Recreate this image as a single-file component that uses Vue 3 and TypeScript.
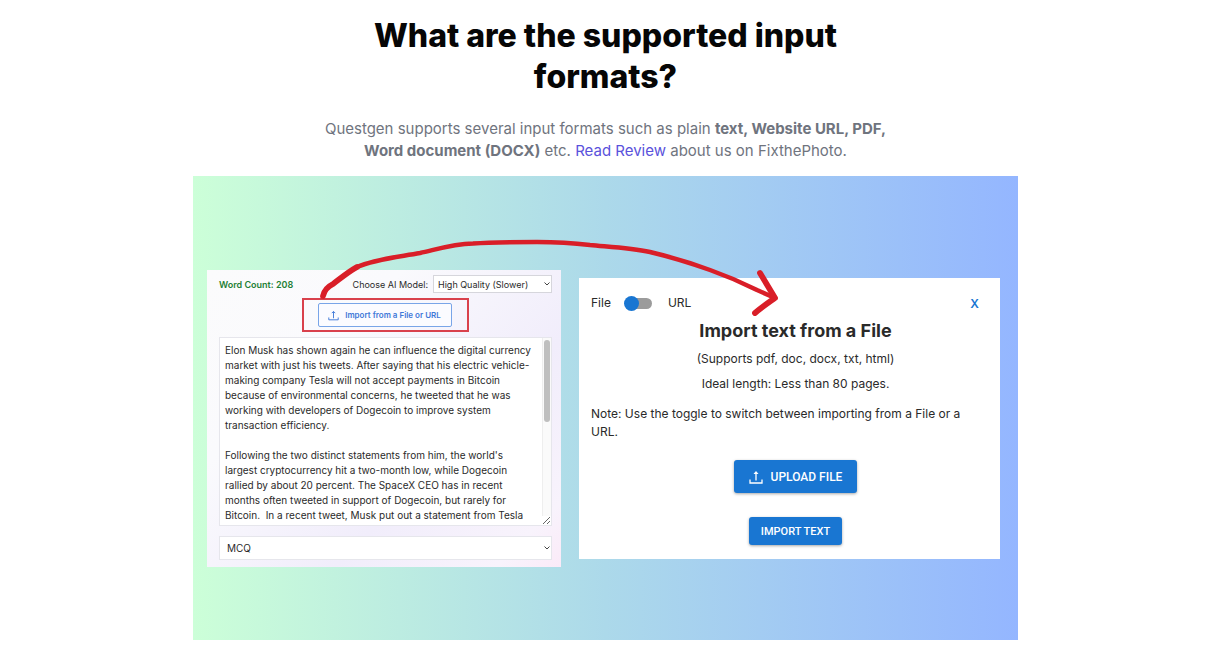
<script setup lang="ts">
import { ref } from 'vue'

const model = ref('High Quality (Slower)')
const quizType = ref('MCQ')
const useUrl = ref(false)

const sample = [
  'Elon Musk has shown again he can influence the digital currency market with just his tweets. After saying that his electric vehicle-making company Tesla will not accept payments in Bitcoin because of environmental concerns, he tweeted that he was working with developers of Dogecoin to improve system transaction efficiency.',
  "Following the two distinct statements from him, the world's largest cryptocurrency hit a two-month low, while Dogecoin rallied by about 20 percent. The SpaceX CEO has in recent months often tweeted in support of Dogecoin, but rarely for Bitcoin.  In a recent tweet, Musk put out a statement from Tesla",
]
const content = ref(sample.join('\n\n'))
</script>

<template>
  <main class="page">
    <header class="intro">
      <h1>What are the supported input formats?</h1>
      <p>
        Questgen supports several input formats such as plain <strong>text, Website URL, PDF,</strong>
        <br />
        <strong>Word document (DOCX)</strong> etc. <a href="#">Read Review</a> about us on FixthePhoto.
      </p>
    </header>

    <section class="stage">
      <div class="editor">
        <div class="editor-head">
          <span class="count">Word Count: 208</span>
          <label class="model-label" for="model">Choose AI Model:</label>
          <span class="select model">
            <select id="model" v-model="model">
              <option>High Quality (Slower)</option>
            </select>
            <svg viewBox="0 0 8 6" aria-hidden="true"><path d="M1.500 1.500 4 4l2.500-2.500" /></svg>
          </span>
        </div>
        <div class="highlight">
          <button type="button" class="outline">
            <svg viewBox="0 0 14 14" aria-hidden="true">
              <path d="M1 9.500v3h12v-3M7 10.500V2M4.800 4l2.200-2.200L9.200 4" />
            </svg>
            Import from a File or URL
          </button>
        </div>
        <div class="text-box">
          <textarea v-model="content" aria-label="Text content" spellcheck="false"></textarea>
          <span class="track" aria-hidden="true"><span class="thumb"></span></span>
        </div>
        <span class="select type">
          <select v-model="quizType" aria-label="Question type">
            <option>MCQ</option>
          </select>
          <svg viewBox="0 0 8 6" aria-hidden="true"><path d="M1.500 1.500 4 4l2.500-2.500" /></svg>
        </span>
      </div>

      <div class="dialog">
        <div class="dialog-head">
          <label for="source">File</label>
          <input id="source" v-model="useUrl" type="checkbox" role="switch" />
          <label for="source">URL</label>
          <button type="button" class="close">X</button>
        </div>
        <h2>Import text from a File</h2>
        <p class="hint">(Supports pdf, doc, docx, txt, html)</p>
        <p class="hint">Ideal length: Less than 80 pages.</p>
        <p class="note">Note: Use the toggle to switch between importing from a File or a URL.</p>
        <button type="button" class="solid upload">
          <svg viewBox="0 0 14 14" aria-hidden="true">
            <path d="M1 9.500V13h12V9.500M7 10.500V3" />
            <path class="tip" d="M4.500 4 7 1l2.500 3z" />
          </svg>
          UPLOAD FILE
        </button>
        <button type="button" class="solid">IMPORT TEXT</button>
      </div>

      <svg class="arrow" viewBox="0 0 825 464" aria-hidden="true">
        <path class="thick" d="M130 120C131 115 134 111 140 108C148 102 155 96 164 91" />
        <path
          d="M164 91C182 83 205 81 227 77C245 73 260 68 280 67.500C300 66 322 66 344 66C362 66 380 67 397 69C418 71 438 72 457 76C478 81 498 87 517 94C534 100 550 107 564 114L582 122"
        />
        <path class="thick" d="M567 97 582 122C575 127 569 131 562 137" />
      </svg>
    </section>
  </main>
</template>

<style>
body {
  margin: 0;
  background: #fff;
}
</style>

<style scoped>
.page {
  box-sizing: border-box;
  padding: 15px 13px 24px 0;
  font-family: Inter, 'Liberation Sans', sans-serif;
  color: #2a2a2a;
}
.page * {
  box-sizing: border-box;
}
h1,
h2,
p {
  margin: 0;
}
button,
select,
textarea {
  font-family: inherit;
  color: inherit;
}
.intro {
  max-width: 576px;
  margin: 0 auto 14px;
  text-align: center;
}
.intro h1 {
  padding: 0 40px;
  font-size: 32px;
  line-height: 41px;
  font-weight: 800;
  color: #060606;
}
.intro p {
  margin-top: 21px;
  font-size: 15px;
  line-height: 22px;
  color: #6f747e;
}
.intro strong {
  font-weight: 700;
}
.intro a {
  color: #5a52dc;
  text-decoration: none;
}
.stage {
  position: relative;
  display: grid;
  grid-template-columns: 354fr 421fr;
  gap: 18px;
  align-items: center;
  max-width: 825px;
  margin: 0 auto;
  padding: 94px 18px 73px 14px;
  background: linear-gradient(90deg, #ccffd8 0%, #acd9ea 50%, #94b6ff 100%);
}
.editor {
  display: flex;
  flex-direction: column;
  padding: 5px 9px 7px 12px;
  background: linear-gradient(135deg, #fbfbfc 0%, #fafafd 30%, #f1edfb 65%, #f8f3fc 90%, #fbeaf8 100%);
}
.editor-head {
  display: flex;
  align-items: center;
  gap: 5px;
  font-size: 9px;
}
.count {
  margin-right: auto;
  font-weight: 600;
  color: #1f8036;
}
.select {
  position: relative;
  display: block;
}
.select select {
  display: block;
  width: 100%;
  margin: 0;
  padding: 0 14px 0 4px;
  border: 1px solid #d6d6dc;
  border-radius: 0;
  background: #fff;
  appearance: none;
}
.select svg {
  position: absolute;
  right: 1px;
  top: 50%;
  width: 8px;
  height: 6px;
  margin-top: -3px;
  pointer-events: none;
  fill: none;
  stroke: #444;
  stroke-width: 1;
}
.model {
  width: 119px;
}
.model select {
  height: 18px;
  font-size: 9px;
}
.highlight {
  align-self: center;
  margin: 5px 0;
  padding: 3px 15px 3px 14px;
  border: 2px solid #d9414c;
}
.outline {
  display: flex;
  align-items: center;
  gap: 6px;
  height: 24px;
  padding: 0 10px 0 9px;
  border: 1px solid #79a5e8;
  border-radius: 2px;
  background: #fbfbff;
  color: #3f78d8;
  font-size: 8px;
  font-weight: 600;
}
.outline svg {
  width: 11px;
  height: 11px;
  fill: none;
  stroke: currentColor;
  stroke-width: 1.2;
}
.text-box {
  position: relative;
}
textarea {
  display: block;
  width: 100%;
  height: 189px;
  padding: 5px 17px 2px 5px;
  border: 1px solid #e6e6ec;
  background: #fff;
  font-size: 10px;
  line-height: 15px;
  resize: vertical;
}
.track {
  position: absolute;
  top: 1px;
  right: 1px;
  bottom: 10px;
  width: 9px;
  padding: 2px 1px;
  border-left: 1px solid #eee;
  background: #fafafa;
  pointer-events: none;
}
.thumb {
  display: block;
  width: 6px;
  height: 47%;
  border-radius: 3px;
  background: #bfbfbf;
}
.type {
  margin-top: 10px;
}
.type select {
  height: 24px;
  padding-left: 7px;
  border-color: #e6e6ec;
  font-size: 10px;
}
.dialog {
  display: flex;
  flex-direction: column;
  align-items: center;
  padding: 15px 0 14px 12px;
  background: #fff;
  font-size: 12px;
  line-height: 18px;
}
.dialog-head {
  display: flex;
  align-items: center;
  align-self: stretch;
  height: 20px;
}
.dialog-head input {
  position: relative;
  width: 28px;
  height: 15px;
  margin: 0 16px 0 13px;
  appearance: none;
}
.dialog-head input::before {
  content: '';
  position: absolute;
  inset: 2px 0 2px 2px;
  border-radius: 6px;
  background: #9b9b9b;
}
.dialog-head input::after {
  content: '';
  position: absolute;
  left: 0;
  top: 0;
  width: 15px;
  height: 15px;
  border-radius: 50%;
  background: #1976d2;
}
.dialog-head input:checked::after {
  left: 13px;
}
.close {
  margin-left: auto;
  padding: 0 21px 0 0;
  border: 0;
  background: none;
  color: #1976d2;
  font-size: 12px;
  font-weight: 600;
}
.dialog h2 {
  margin: 5px 0 6px;
  font-size: 18px;
  line-height: 26px;
  font-weight: 700;
}
.hint {
  margin-bottom: 7px;
}
.note {
  align-self: stretch;
  margin: 5px 0 19px;
  padding-right: 24px;
}
.solid {
  display: flex;
  align-items: center;
  height: 28px;
  padding: 0 12px;
  border: 0;
  border-radius: 3px;
  background: #1976d2;
  box-shadow: 0 1px 3px rgba(0, 0, 0, 0.35);
  color: #fff;
  font-family: Roboto, sans-serif;
  font-size: 11px;
  font-weight: 500;
}
.upload {
  gap: 8px;
  height: 33px;
  margin-bottom: 24px;
  padding: 0 15px;
  font-size: 12px;
}
.upload svg {
  width: 14px;
  height: 14px;
  fill: none;
  stroke: currentColor;
  stroke-width: 1.3;
}
.upload .tip {
  fill: currentColor;
  stroke: none;
}
.arrow {
  position: absolute;
  inset: 0;
  width: 100%;
  height: 100%;
  pointer-events: none;
  fill: none;
  stroke: #d91e28;
  stroke-width: 4.5;
  stroke-linecap: round;
  stroke-linejoin: round;
}
.arrow .thick {
  stroke-width: 5.8;
}
</style>
